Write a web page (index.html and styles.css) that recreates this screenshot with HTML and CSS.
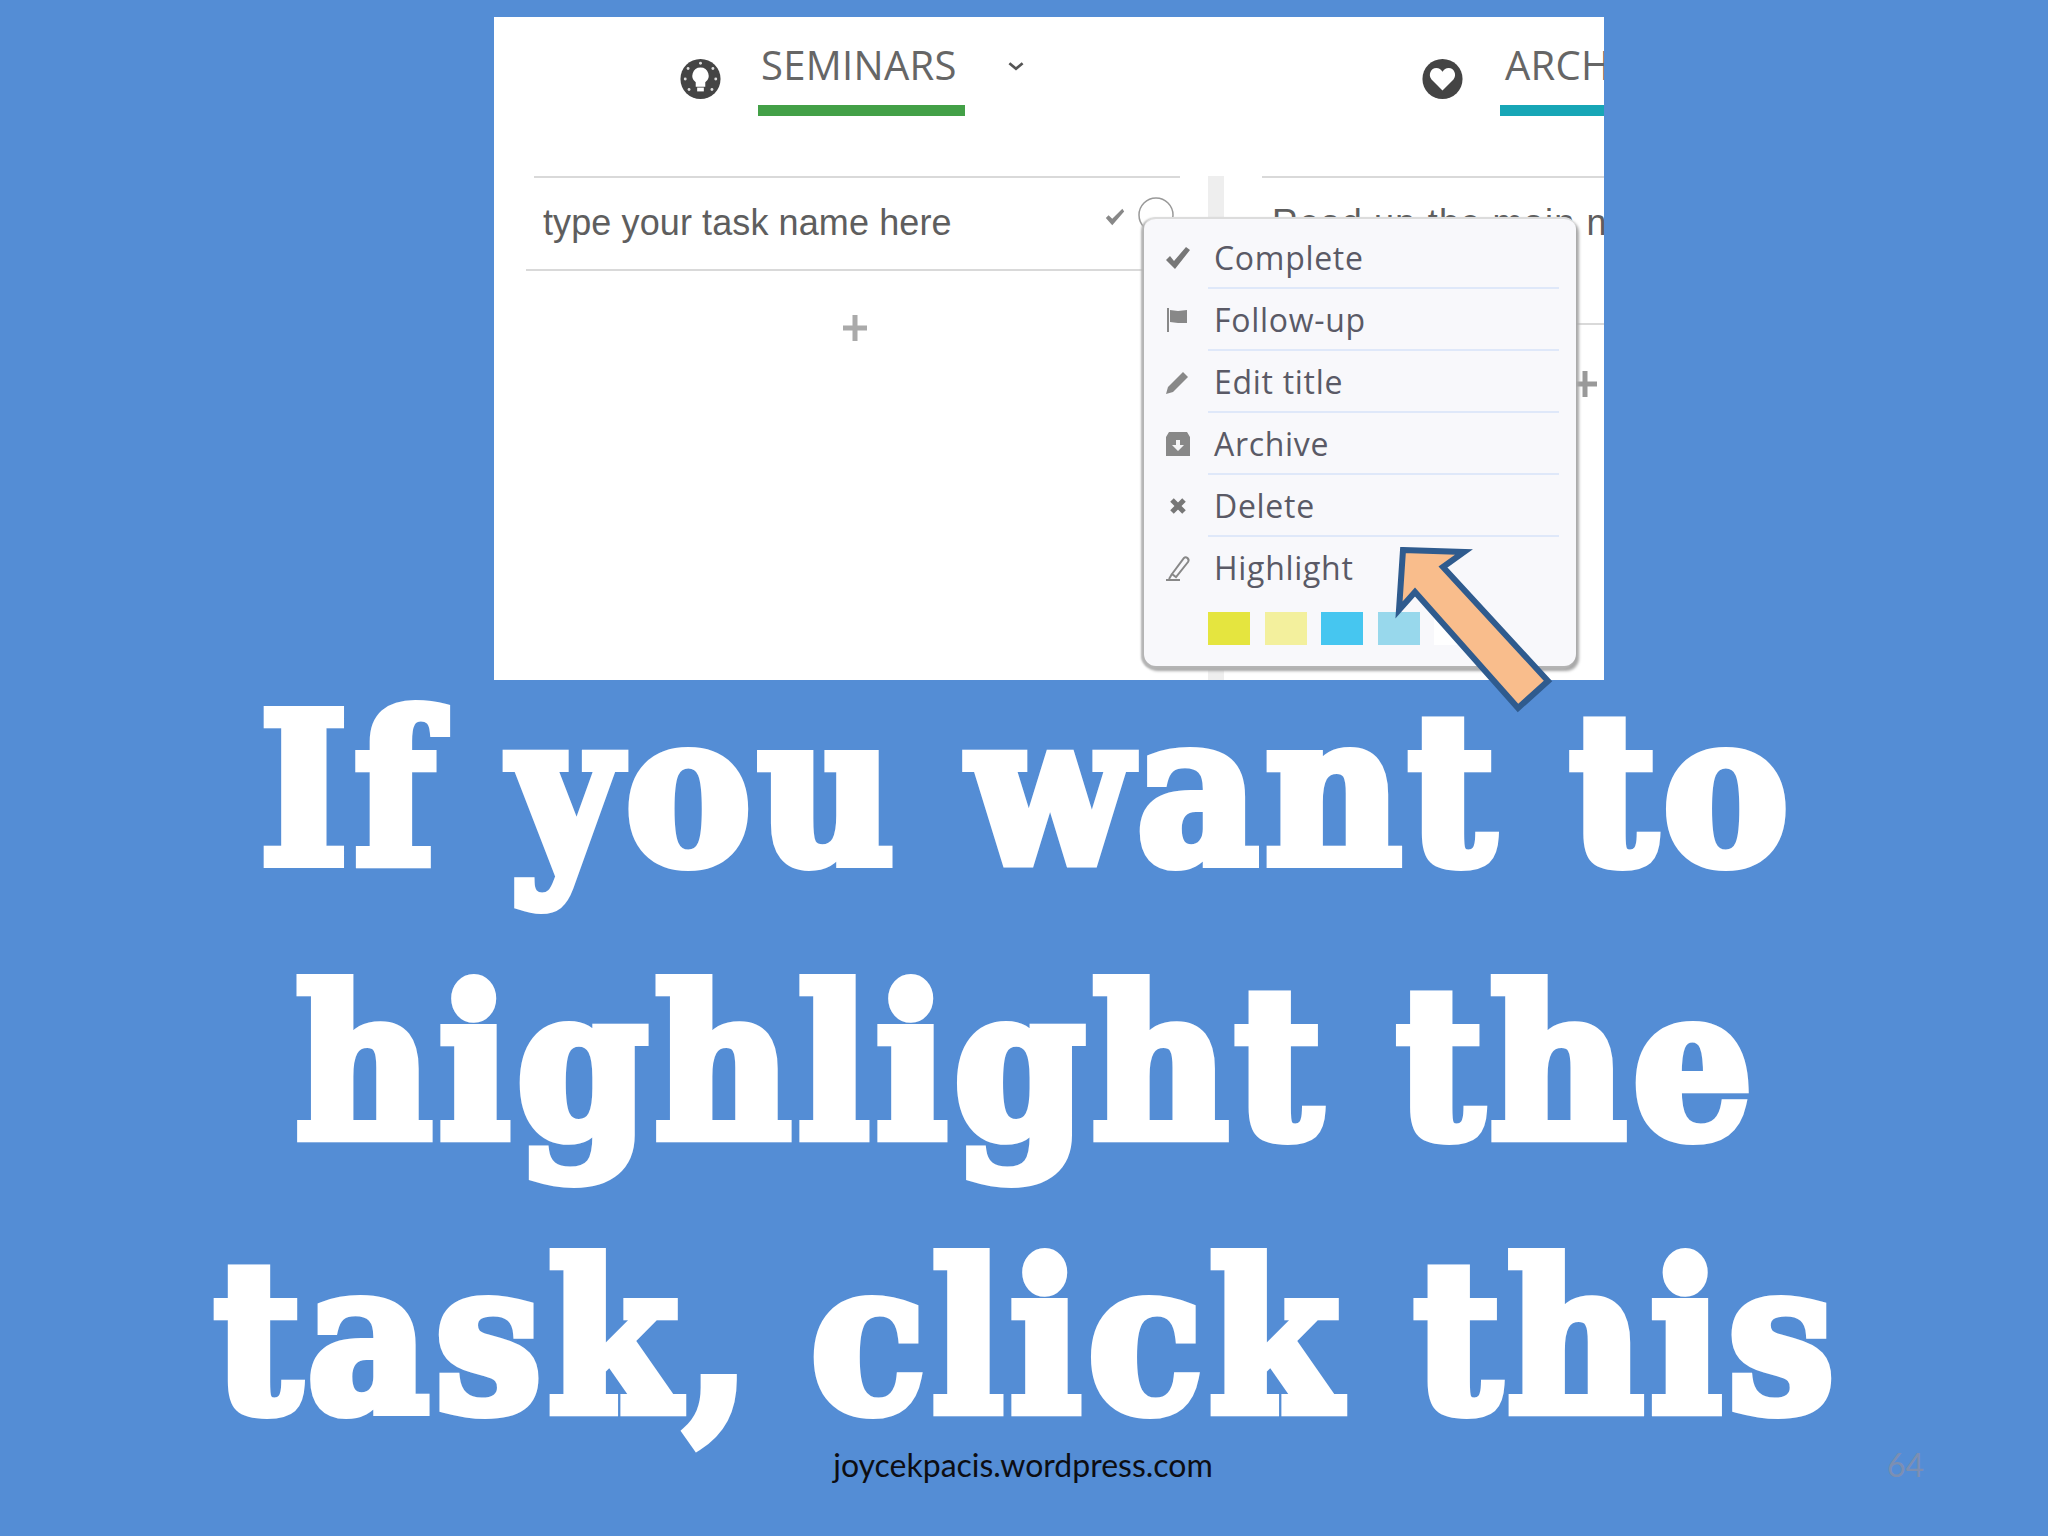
FILE: index.html
```html
<!DOCTYPE html>
<html lang="en">
<head>
<meta charset="utf-8">
<title>If you want to highlight the task</title>
<link rel="stylesheet" href="styles.css">
</head>
<body>
<main class="slide">
  <section class="shot">
    <div class="tabs">
      <div class="tab tab-seminars">
        <svg class="tab-icon" viewBox="0 0 44 44"><circle cx="22" cy="22" r="21" fill="#444"/><path d="M22 10a8.500 8.500 0 0 0-5 15.400V30h10v-4.600A8.500 8.500 0 0 0 22 10z" fill="#fff"/><rect x="18.500" y="31" width="7" height="4" fill="#fff"/><g fill="#ddd"><circle cx="22" cy="5.500" r="1.500"/><circle cx="9" cy="11" r="1.500"/><circle cx="35" cy="11" r="1.500"/><circle cx="6" cy="22" r="1.500"/><circle cx="38" cy="22" r="1.500"/><circle cx="10" cy="33" r="1.500"/><circle cx="34" cy="33" r="1.500"/></g></svg>
        <div class="tab-name green">SEMINARS</div>
        <svg class="chevron" viewBox="0 0 16 10"><path d="M2 2l6 5 6-5" fill="none" stroke="#555" stroke-width="2.500"/></svg>
      </div>
      <div class="tab tab-arch">
        <svg class="tab-icon" viewBox="0 0 44 44"><circle cx="22" cy="22" r="21" fill="#444"/><path d="M22 34L10.500 22.500C6.500 17.500 10 10.500 15.500 10.500c3 0 5 1.500 6.500 4 1.500-2.500 3.500-4 6.500-4 5.500 0 9 7 5 12z" fill="#fff"/></svg>
        <div class="tab-name teal">ARCHIVE</div>
      </div>
    </div>
    <div class="board">
      <div class="col col-left">
        <div class="task">
          <span>type your task name here</span>
          <svg class="task-check" viewBox="0 0 24 22"><path d="M2 12l3-3 4 4L20 2l2 3L9 20z" fill="#888"/></svg>
          <svg class="task-circle" viewBox="0 0 38 38"><circle cx="19" cy="19" r="17" fill="none" stroke="#999" stroke-width="1.500"/></svg>
        </div>
        <svg class="plus" viewBox="0 0 24 28"><path d="M0 14h24M12 1v26" stroke="#aaa" stroke-width="5"/></svg>
      </div>
      <div class="divider"></div>
      <div class="col col-right">
        <div class="task task-tall"><span>Read up the main n</span></div>
        <svg class="plus plus-end" viewBox="0 0 24 28"><path d="M0 14h24M12 1v26" stroke="#999" stroke-width="5"/></svg>
      </div>
    </div>
    <div class="menu">
      <div class="row"><div class="row-icon"><svg viewBox="0 0 26 26"><path d="M1 15l4-4 4 5L21 2l4 3L10 24z" fill="#777"/></svg></div><div class="row-label">Complete</div></div>
      <div class="row"><div class="row-icon"><svg viewBox="0 0 26 26"><path d="M3 1v24" stroke="#888" stroke-width="2"/><path d="M5 3l8 1 9-1v13H13l-8-1z" fill="#888"/></svg></div><div class="row-label">Follow-up</div></div>
      <div class="row"><div class="row-icon"><svg viewBox="0 0 26 26"><path d="M1 25l2-7L18 3l5 5L8 23z" fill="#888"/></svg></div><div class="row-label">Edit title</div></div>
      <div class="row"><div class="row-icon"><svg viewBox="0 0 26 26"><path d="M4 1h18l3 5v19H1V6z" fill="#888"/><path d="M11 9h4v5h4l-6 6-6-6h4z" fill="#f4f4f6"/></svg></div><div class="row-label">Archive</div></div>
      <div class="row"><div class="row-icon"><svg viewBox="0 0 26 26"><path d="M7 7l12 12M19 7L7 19" stroke="#777" stroke-width="5"/></svg></div><div class="row-label">Delete</div></div>
      <div class="row row-last"><div class="row-icon"><svg viewBox="0 0 26 26"><path d="M7 19L19 3c2-2 6 1 4 4L11 22z" fill="none" stroke="#888" stroke-width="2"/><path d="M1 25h14M7 19l-3 5" stroke="#888" stroke-width="2"/></svg></div><div class="row-label">Highlight</div></div>
      <div class="swatches">
        <span class="swatch s-yellow"></span><span class="swatch s-pale"></span><span class="swatch s-blue"></span><span class="swatch s-sky"></span><span class="swatch s-white"></span>
      </div>
    </div>
  </section>
  <h1 class="headline">If you want to<br>highlight the<br>task,<span class="tight"> </span>click this</h1>
  <footer class="footer">
    <span class="site">joycekpacis.wordpress.com</span>
    <span class="page">64</span>
  </footer>
  <svg class="arrow" viewBox="0 0 170 180"><polygon points="13,10 74,12 53,27 158,141 128,168 25,52 9,70" fill="#f9bd8c" stroke="#2f5b8e" stroke-width="6" stroke-miterlimit="8"/></svg>
</main>
</body>
</html>
```
FILE: styles.css
```css
* { box-sizing: border-box; }
html, body { margin: 0; padding: 0; }
body { width: 2048px; height: 1536px; overflow: hidden; background: #548dd5; }
.slide { position: relative; width: 2048px; height: 1536px; padding-top: 17px; background: #548dd5; }

.shot { position: relative; width: 1110px; height: 663px; margin-left: 494px; background: #fff; overflow: hidden; font-family: "Open Sans", sans-serif; color: #5c5c5c; }

.tabs { display: flex; height: 159px; }
.tab { display: flex; align-items: flex-start; }
.tab-seminars { width: 890px; padding-left: 185px; }
.tab-icon { width: 43px; height: 42px; margin-top: 41px; flex: none; }
.tab-name { height: 99px; margin-left: 36px; padding-top: 23px; font-size: 40px; line-height: 50px; letter-spacing: 0.3px; white-space: nowrap; color: #666; }
.tab-seminars .tab-name { width: 207px; padding-left: 3px; border-bottom: 11px solid #43a047; }
.tab-arch { width: 220px; padding-left: 37px; flex: none; }
.tab-arch .tab-name { width: 140px; padding-left: 5px; border-bottom: 11px solid #17a6b6; }
.chevron { width: 18px; height: 11px; margin: 44px 0 0 42px; flex: none; }

.board { display: flex; align-items: stretch; height: 504px; }
.col-left { width: 646px; margin-left: 40px; flex: none; border-top: 2px solid #d9d9d9; display: flex; flex-direction: column; }
.task { position: relative; height: 93px; padding: 23px 0 0 17px; margin-left: -8px; border-bottom: 2px solid #d9d9d9; font-family: "Liberation Sans", sans-serif; font-size: 36px; line-height: 44px; letter-spacing: 0.1px; color: #5e5e5e; white-space: nowrap; }
.task-check { position: absolute; left: 578px; top: 28px; width: 22px; height: 22px; }
.task-circle { position: absolute; left: 611px; top: 18px; width: 38px; height: 38px; }
.plus { width: 24px; height: 28px; align-self: center; margin: 43px 5px 0 0; }
.divider { width: 16px; margin-left: 28px; flex: none; background: #eee; }
.col-right { flex: 1; margin-left: 38px; border-top: 2px solid #d9d9d9; display: flex; flex-direction: column; min-width: 0; }
.task-tall { height: 147px; margin-left: 0; padding-left: 10px; letter-spacing: 1.2px; }
.plus-end { align-self: flex-end; margin: 45px 7px 0 0; }

.menu { position: absolute; left: 650px; top: 200px; width: 432px; height: 449px; padding-top: 8px; background: #f8f8fb; border-top: 2px solid #dcdcdc; border-radius: 12px; box-shadow: -2px 2px 2px 1px #b4b4b4, 2px 4px 3px 1px #a8a8a8; }
.row { display: flex; height: 62px; }
.row-icon { width: 64px; flex: none; display: flex; align-items: center; justify-content: center; padding-left: 4px; }
.row-icon svg { width: 26px; height: 26px; }
.row-label { flex: 1; margin-right: 17px; padding-left: 6px; border-bottom: 2px solid #dfe8f9; font-size: 32px; line-height: 62px; color: #5a5a66; letter-spacing: 0.7px; white-space: nowrap; }
.row-last .row-label { border-bottom: 0; }
.swatches { display: flex; gap: 14.500px; margin: 13px 0 0 64px; }
.swatch { width: 42px; height: 33px; }
.s-yellow { background: #e5e53f; }
.s-pale { background: #f3f09d; }
.s-blue { background: #46c6f0; }
.s-sky { background: #98d8ec; }
.s-white { background: #fff; }

.headline { height: 792px; margin: -27px 0 0; padding-left: 7px; text-align: center; font-family: "DejaVu Serif Condensed", "DejaVu Serif", serif; font-weight: 700; font-size: 208px; line-height: 274px; letter-spacing: 7px; word-spacing: -4px; color: #fff; -webkit-text-stroke: 10px #fff; white-space: nowrap; }
.tight { word-spacing: -18px; }

.footer { display: grid; grid-template-columns: 1fr auto 1fr; align-items: baseline; padding: 0 124px 0 122px; }
.site { grid-column: 2; font-family: Lato, "Open Sans", sans-serif; font-size: 32px; line-height: 40px; color: #0d0d12; }
.page { grid-column: 3; justify-self: end; font-family: Lato, "Open Sans", sans-serif; font-size: 32px; color: #7c8fb2; }

.arrow { position: absolute; left: 1390px; top: 540px; width: 170px; height: 180px; }
```
